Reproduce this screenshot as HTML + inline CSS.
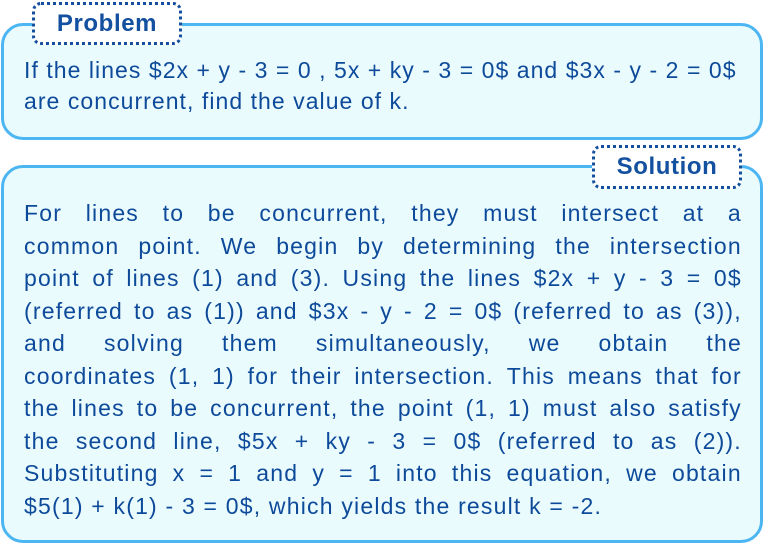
<!DOCTYPE html>
<html><head><meta charset="utf-8"><style>
body{margin:0;width:764px;height:545px;background:#fff;font-family:"Liberation Sans",sans-serif;color:#0d4a9a;position:relative;overflow:hidden}
.box{position:absolute;background:#eafbfe;border:3px solid #4cb6f3;border-radius:22px;box-sizing:border-box}
.lab{position:absolute;background:#fff;border:3px dotted #144f9e;border-radius:9px;box-sizing:border-box;font-weight:bold;font-size:24px;letter-spacing:0.6px;text-align:center;color:#1350a0}
.t{position:absolute;font-size:23px;letter-spacing:1.2px;line-height:32.5px}
.j div{white-space:nowrap;display:flex;justify-content:space-between}
</style></head><body>
<div class="box" style="left:1px;top:23px;width:762px;height:117px"></div>
<div class="lab" style="left:32px;top:2px;width:150px;height:43px;line-height:37px">Problem</div>
<div class="t" style="left:24px;top:55px;line-height:31px;letter-spacing:1.05px">If the lines $2x + y - 3 = 0 , 5x + ky - 3 = 0$ and $3x - y - 2 = 0$<br>are concurrent, find the value of k.</div>
<div class="box" style="left:1px;top:165px;width:762px;height:378px"></div>
<div class="lab" style="left:592px;top:145px;width:150px;height:44px;line-height:38px">Solution</div>
<div class="t j" style="left:24px;top:197px;width:718px">
<div><span>For</span><span>lines</span><span>to</span><span>be</span><span>concurrent,</span><span>they</span><span>must</span><span>intersect</span><span>at</span><span>a</span></div>
<div><span>common</span><span>point.</span><span>We</span><span>begin</span><span>by</span><span>determining</span><span>the</span><span>intersection</span></div>
<div><span>point</span><span>of</span><span>lines</span><span>(1)</span><span>and</span><span>(3).</span><span>Using</span><span>the</span><span>lines</span><span>$2x</span><span>+</span><span>y</span><span>-</span><span>3</span><span>=</span><span>0$</span></div>
<div><span>(referred</span><span>to</span><span>as</span><span>(1))</span><span>and</span><span>$3x</span><span>-</span><span>y</span><span>-</span><span>2</span><span>=</span><span>0$</span><span>(referred</span><span>to</span><span>as</span><span>(3)),</span></div>
<div><span>and</span><span>solving</span><span>them</span><span>simultaneously,</span><span>we</span><span>obtain</span><span>the</span></div>
<div><span>coordinates</span><span>(1,</span><span>1)</span><span>for</span><span>their</span><span>intersection.</span><span>This</span><span>means</span><span>that</span><span>for</span></div>
<div><span>the</span><span>lines</span><span>to</span><span>be</span><span>concurrent,</span><span>the</span><span>point</span><span>(1,</span><span>1)</span><span>must</span><span>also</span><span>satisfy</span></div>
<div><span>the</span><span>second</span><span>line,</span><span>$5x</span><span>+</span><span>ky</span><span>-</span><span>3</span><span>=</span><span>0$</span><span>(referred</span><span>to</span><span>as</span><span>(2)).</span></div>
<div><span>Substituting</span><span>x</span><span>=</span><span>1</span><span>and</span><span>y</span><span>=</span><span>1</span><span>into</span><span>this</span><span>equation,</span><span>we</span><span>obtain</span></div>
<div style="display:block">$5(1) + k(1) - 3 = 0$, which yields the result k = -2.</div>
</div>
</body></html>
